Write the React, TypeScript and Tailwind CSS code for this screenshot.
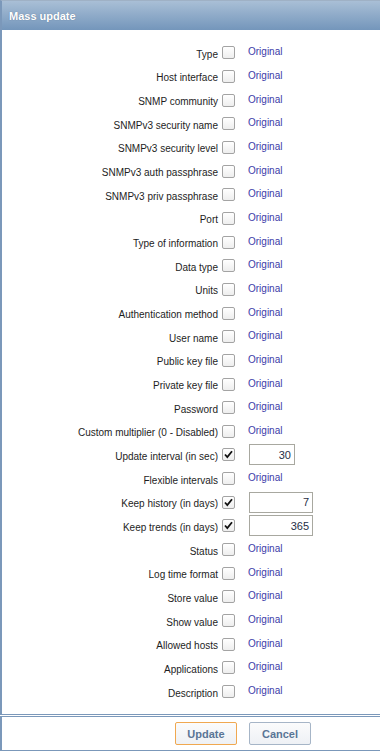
import React from "react";

type Row = { label: string; checked?: boolean; value?: string; wide?: boolean };

const rows: Row[] = [
  { label: "Type" },
  { label: "Host interface" },
  { label: "SNMP community" },
  { label: "SNMPv3 security name" },
  { label: "SNMPv3 security level" },
  { label: "SNMPv3 auth passphrase" },
  { label: "SNMPv3 priv passphrase" },
  { label: "Port" },
  { label: "Type of information" },
  { label: "Data type" },
  { label: "Units" },
  { label: "Authentication method" },
  { label: "User name" },
  { label: "Public key file" },
  { label: "Private key file" },
  { label: "Password" },
  { label: "Custom multiplier (0 - Disabled)" },
  { label: "Update interval (in sec)", checked: true, value: "30" },
  { label: "Flexible intervals" },
  { label: "Keep history (in days)", checked: true, value: "7", wide: true },
  { label: "Keep trends (in days)", checked: true, value: "365", wide: true },
  { label: "Status" },
  { label: "Log time format" },
  { label: "Store value" },
  { label: "Show value" },
  { label: "Allowed hosts" },
  { label: "Applications" },
  { label: "Description" },
];

const Checkbox = ({ checked }: { checked?: boolean }) => (
  <span className="w-[13px] h-[13px] border border-[#a3a3a3] rounded-[2px] bg-gradient-to-b from-white to-[#eeeeee] flex items-center justify-center">
    {checked && (
      <svg width="11" height="11" viewBox="0 0 11 11">
        <path d="M2 5.5 L4.3 8 L9 2.2" fill="none" stroke="#111" strokeWidth="1.8" />
      </svg>
    )}
  </span>
);

const App: React.FC = () => {
  return (
    <div className="w-[380px] h-[752px] bg-white overflow-hidden font-['Liberation_Sans',Arial,sans-serif] text-[10px]">
      <div className="border-t border-[#9fb1c5] border-l-2 border-l-[#7b98ba] border-b border-b-[#7b98ba]">
        <div className="h-[29px] bg-gradient-to-b from-[#a9bfd6] to-[#7496bb] flex items-center pl-[7px] pt-[1px]">
          <span className="text-white font-bold text-[11px] [text-shadow:0_0_1px_rgba(60,80,110,0.6)]">Mass update</span>
        </div>
        <div className="pt-[11px] pb-[11px]">
          {rows.map((r) => (
            <div key={r.label} className="h-[23.67px] flex items-center">
              <span className="w-[216px] text-right text-[#1d1d1d] pt-[3px]">{r.label}</span>
              <span className="ml-[4px]">
                <Checkbox checked={r.checked} />
              </span>
              {r.value ? (
                <span
                  className={`ml-[14px] h-[21px] border border-[#a8a8a0] bg-white text-right pr-[3px] text-[11px] text-[#1f2f46] flex items-center justify-end ${
                    r.wide ? "w-[64px]" : "w-[46px]"
                  }`}
                >
                  {r.value}
                </span>
              ) : (
                <span className="ml-[13px] text-[#3b3ba8] pb-[2px]">Original</span>
              )}
            </div>
          ))}
        </div>
      </div>
      <div className="mt-[1px] h-[35px] border-t border-[#7b98ba] border-l-2 border-l-[#7b98ba] border-b border-b-[#7b98ba] flex items-center gap-[12px] pl-[173px]">
        <button className="w-[62px] h-[23px] border border-[#f0a850] rounded-[2px] bg-gradient-to-b from-[#fbfbfc] to-[#eef1f5] text-[#5a7596] font-bold text-[11px]">
          Update
        </button>
        <button className="w-[62px] h-[23px] border border-[#a6b5c7] rounded-[2px] bg-gradient-to-b from-[#fbfbfc] to-[#eef1f5] text-[#5a7596] font-bold text-[11px]">
          Cancel
        </button>
      </div>
    </div>
  );
};

export default App;
